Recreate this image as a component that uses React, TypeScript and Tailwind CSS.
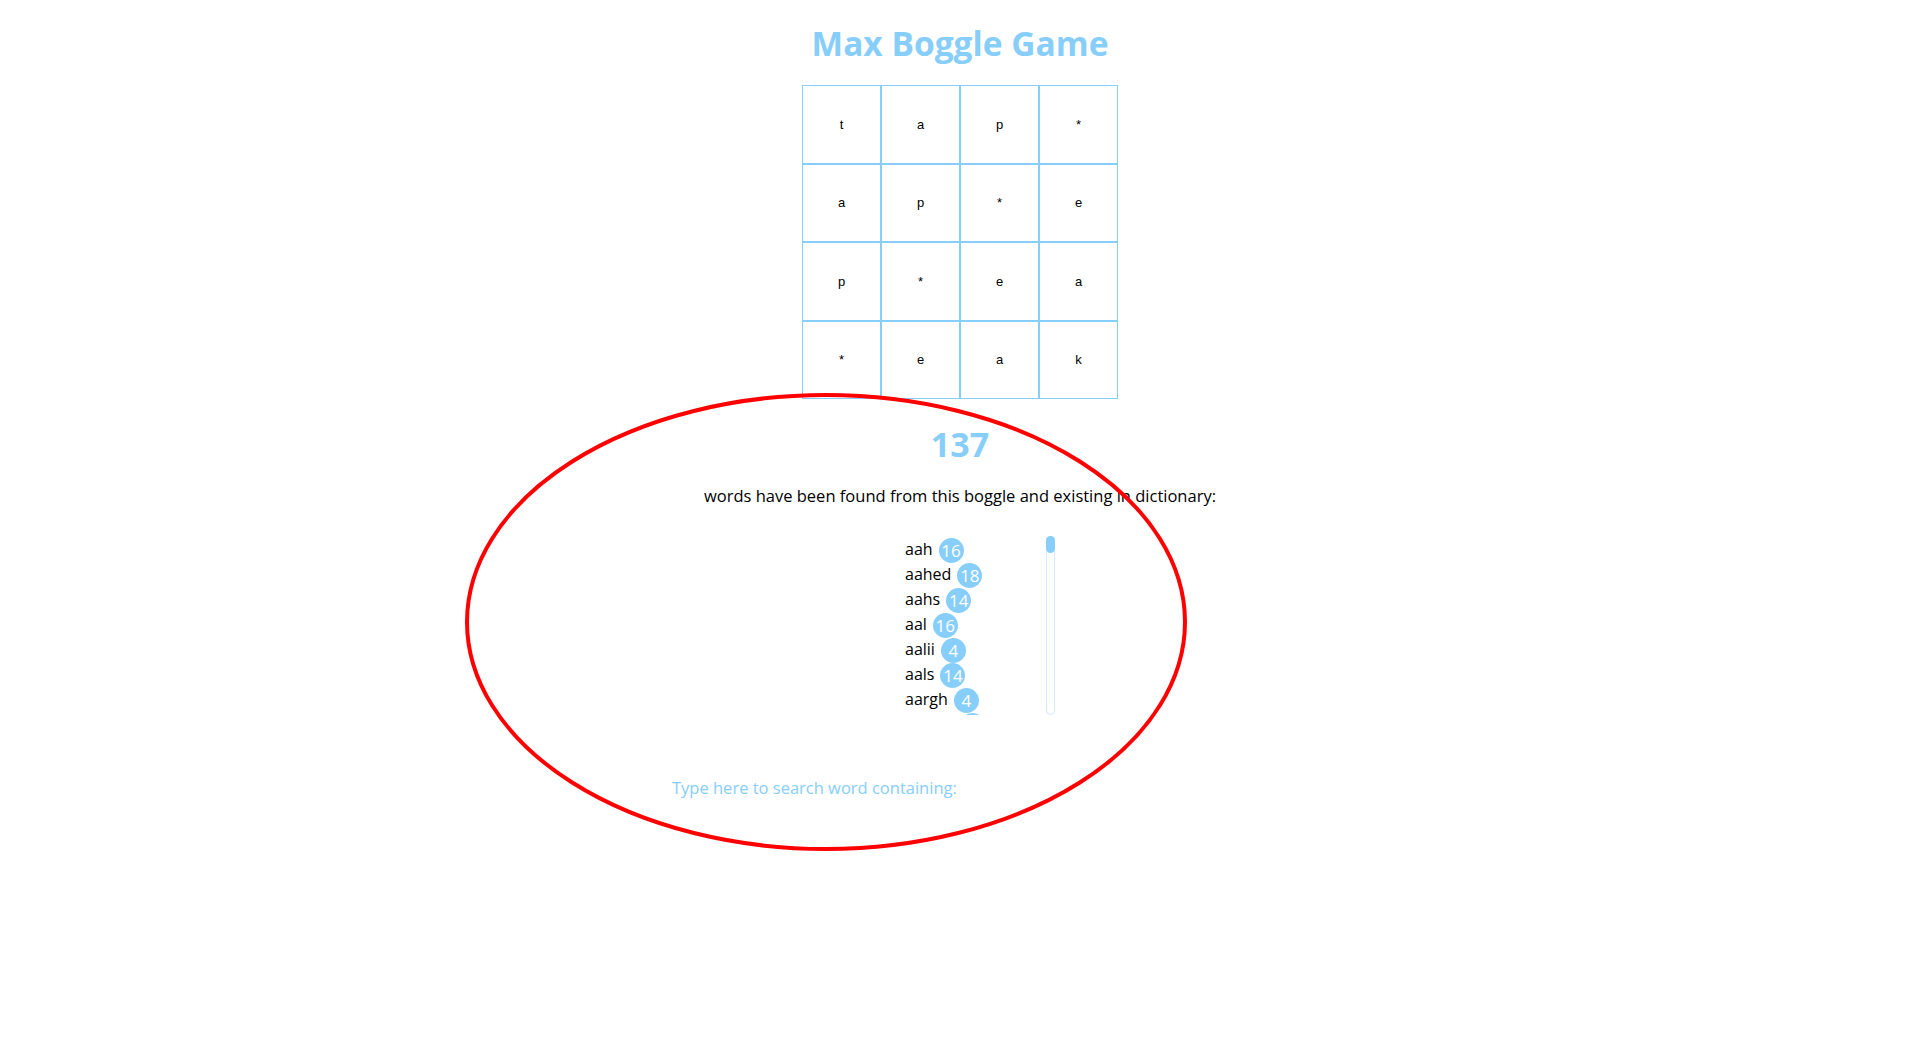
import React, { useState } from "react";

const board = [
  ["t", "a", "p", "*"],
  ["a", "p", "*", "e"],
  ["p", "*", "e", "a"],
  ["*", "e", "a", "k"],
];

const known: [string, number][] = [
  ["aah", 16],
  ["aahed", 18],
  ["aahs", 14],
  ["aal", 16],
  ["aalii", 4],
  ["aals", 14],
  ["aargh", 4],
  ["aarrgh", 6],
];

const more =
  "aas aba abac abaca abaci aback abacs abaft abaka abamp aband abase abash abask abate abaya abbas abbed abbes abbey abbot abcee abeam abear abele abers abets abhor abide abies abled abler ables ablet ablow abmho abode abohm aboil aboma aboon abord abore abort about above abram abray abrim abrin abris absey absit abuna abune abuse abuts abuzz abyes abysm abyss acais acari accas accoy acerb acers aceta achar ached aches achoo acids acidy acing acini ackee acker acmes acmic acned acnes acock acold acorn acred acres acrid acros acted actin acton actor acute acyls adage adapt adaws adays adbot addax added adder addio addle adeem adept adhan adieu adios adits adman admen admin admit admix adobe adobo adopt adore adorn adown adoze adrad adred adsum aduki adult adunc adust".split(
    " "
  );

const words: [string, number][] = [
  ...known,
  ...more.map((w, i): [string, number] => [w, ((i * 7) % 17) + 2]),
].slice(0, 137);

export default function App() {
  const [query, setQuery] = useState("");

  const shown = words.filter(([w]) => w.includes(query.toLowerCase()));

  return (
    <div className="relative h-screen overflow-hidden bg-white font-['Open_Sans',sans-serif] text-black">
      <div className="flex flex-col items-center pt-[23px]">
        <h1 className="text-[33.5px] leading-[40px] font-bold text-[#87cefa]">
          Max Boggle Game
        </h1>

        {/* Board */}
        <div className="mt-[22px] grid grid-cols-4 font-['Liberation_Sans',Arial,sans-serif] text-[13px]">
          {board.flat().map((ch, i) => (
            <div
              key={i}
              className="flex h-[78.5px] w-[79px] items-center justify-center border border-[#87cefa]"
            >
              {ch}
            </div>
          ))}
        </div>

        <h2 className="mt-[23px] text-[34px] leading-[44px] font-bold text-[#87cefa]">
          {words.length}
        </h2>

        <p className="mt-[18px] text-[16.5px] leading-[24px]">
          words have been found from this boggle and existing in dictionary:
        </p>

        {/* Word list with its thin scroll bar */}
        <div className="mt-[28px] flex h-[179px] w-[190px]">
          <ul className="h-full flex-1 overflow-hidden pl-[40px]">
            {shown.map(([w, n]) => (
              <li key={w} className="flex h-[25px] items-center gap-[6px] text-[16px]">
                <span>{w}</span>
                <span className="mt-[4px] flex h-[25px] w-[25px] shrink-0 items-center justify-center rounded-full bg-[#87cefa] text-[17px] text-white">
                  {n}
                </span>
              </li>
            ))}
          </ul>
          <div className="h-full w-[9px] rounded-full border border-[#d3ebfc]">
            <div className="-m-px h-[17px] rounded-full bg-[#87cefa]" />
          </div>
        </div>

        <input
          value={query}
          onChange={(e) => setQuery(e.target.value)}
          placeholder="Type here to search word containing:"
          className="mt-[57px] h-[30px] w-[576px] bg-transparent text-[16.5px] outline-none placeholder:text-[#87cefa]"
        />
      </div>

      {/* annotation */}
      <svg
        className="pointer-events-none absolute inset-0 h-full w-full"
        viewBox="0 0 1920 1045"
      >
        <ellipse
          cx="826"
          cy="622"
          rx="359"
          ry="227"
          fill="none"
          stroke="#ff0000"
          strokeWidth="4"
        />
      </svg>
    </div>
  );
}
